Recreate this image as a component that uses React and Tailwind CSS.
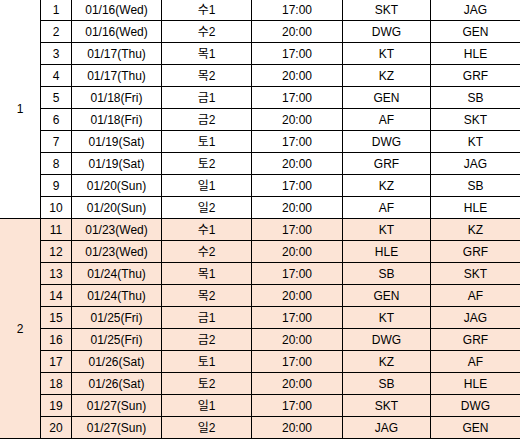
import React from "react";

const games = [
  [1, "01/16(Wed)", "수1", "17:00", "SKT", "JAG"],
  [2, "01/16(Wed)", "수2", "20:00", "DWG", "GEN"],
  [3, "01/17(Thu)", "목1", "17:00", "KT", "HLE"],
  [4, "01/17(Thu)", "목2", "20:00", "KZ", "GRF"],
  [5, "01/18(Fri)", "금1", "17:00", "GEN", "SB"],
  [6, "01/18(Fri)", "금2", "20:00", "AF", "SKT"],
  [7, "01/19(Sat)", "토1", "17:00", "DWG", "KT"],
  [8, "01/19(Sat)", "토2", "20:00", "GRF", "JAG"],
  [9, "01/20(Sun)", "일1", "17:00", "KZ", "SB"],
  [10, "01/20(Sun)", "일2", "20:00", "AF", "HLE"],
  [11, "01/23(Wed)", "수1", "17:00", "KT", "KZ"],
  [12, "01/23(Wed)", "수2", "20:00", "HLE", "GRF"],
  [13, "01/24(Thu)", "목1", "17:00", "SB", "SKT"],
  [14, "01/24(Thu)", "목2", "20:00", "GEN", "AF"],
  [15, "01/25(Fri)", "금1", "17:00", "KT", "JAG"],
  [16, "01/25(Fri)", "금2", "20:00", "DWG", "GRF"],
  [17, "01/26(Sat)", "토1", "17:00", "KZ", "AF"],
  [18, "01/26(Sat)", "토2", "20:00", "SB", "HLE"],
  [19, "01/27(Sun)", "일1", "17:00", "SKT", "DWG"],
  [20, "01/27(Sun)", "일2", "20:00", "JAG", "GEN"],
];

const cell = "flex items-center justify-center border-r border-b border-black";

export default function App() {
  return (
    <div
      className="w-[520px] h-[439px] overflow-hidden bg-white text-black text-[12px]"
      style={{ fontFamily: '"Liberation Sans", Arial, "Noto Sans CJK KR", sans-serif' }}
    >
      <div className="-mt-px grid grid-cols-[41px_31px_90px_90px_91px_88px_90px] auto-rows-[22px] w-[521px]">
        {games.map((g, i) => {
          const bg = i >= 10 ? "bg-[#fce4d6]" : "bg-white";
          return (
            <React.Fragment key={g[0]}>
              {i % 10 === 0 && (
                <div className={`${cell} ${bg} row-span-10`}>{i === 0 ? 1 : 2}</div>
              )}
              {g.map((v, j) => (
                <div key={j} className={`${cell} ${bg}`}>
                  {v}
                </div>
              ))}
            </React.Fragment>
          );
        })}
      </div>
    </div>
  );
}
